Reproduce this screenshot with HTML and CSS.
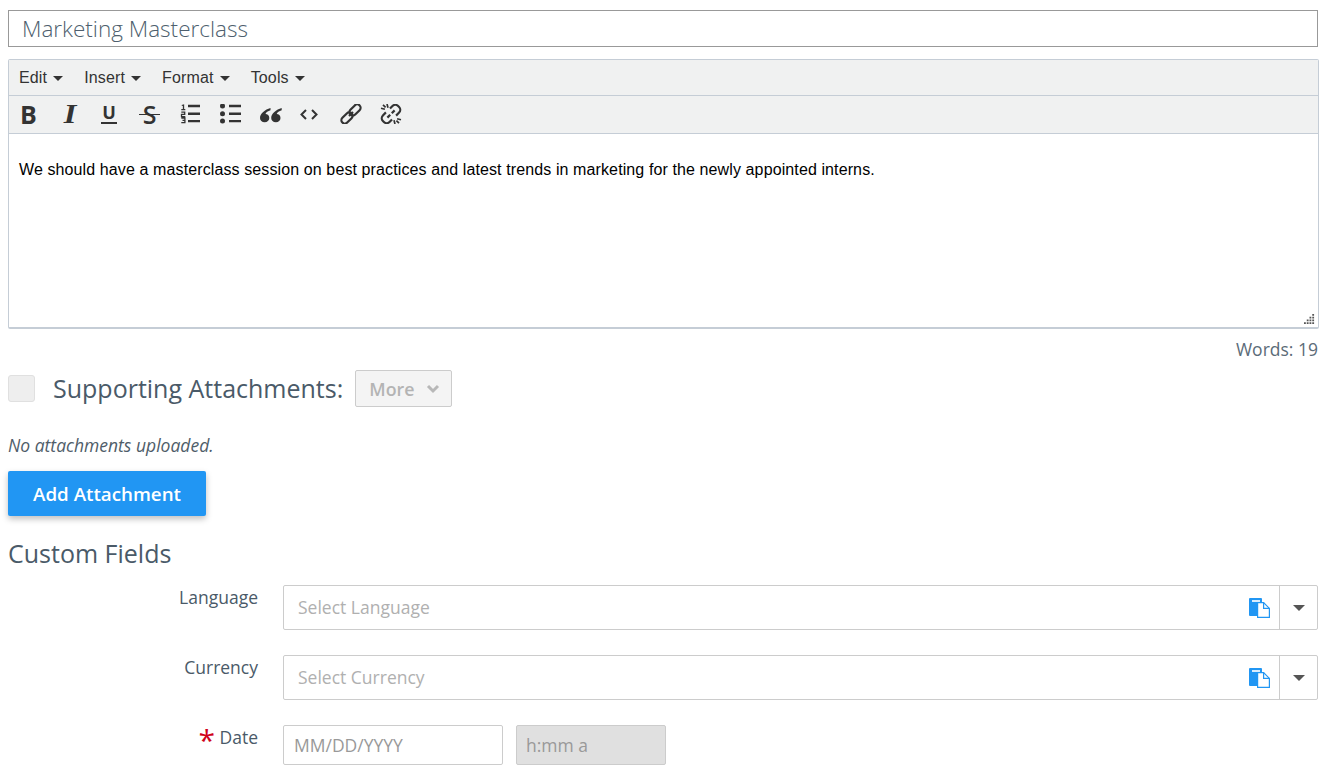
FILE: index.html
```html
<!DOCTYPE html>
<html lang="en">
<head>
<meta charset="utf-8">
<title>Marketing Masterclass</title>
<link rel="stylesheet" href="styles.css">
</head>
<body>
<main class="page">
  <div class="title-input">Marketing Masterclass</div>

  <section class="editor">
    <div class="menubar">
      <span class="menu-item">Edit<i class="caret"></i></span>
      <span class="menu-item">Insert<i class="caret"></i></span>
      <span class="menu-item">Format<i class="caret"></i></span>
      <span class="menu-item">Tools<i class="caret"></i></span>
    </div>
    <div class="toolbar">
      <span class="tool"><span class="glyph glyph-b">B</span></span>
      <span class="tool"><span class="glyph glyph-i">I</span></span>
      <span class="tool"><span class="glyph glyph-u">U</span></span>
      <span class="tool"><span class="glyph glyph-s">S</span></span>
      <span class="tool">
        <svg class="icon" viewBox="0 0 22 20"><path d="M8 .8h12v2.400H8zM8 8.500h12v2.400H8zM8 15.900h12v2.400H8z" fill="#333"/><path d="M1.800 1.500 3.500 1v4.500M1.300 5.700h4M1.300 8.200h3.400v2.200H1.500v2.200h3.800M1.300 14h3.600v4.600H1.300M2.500 16.300h2.400" fill="none" stroke="#333" stroke-width="1.300"/></svg>
      </span>
      <span class="tool">
        <svg class="icon" viewBox="-1 0 22 20"><circle cx="1.500" cy="2" r="2.500" fill="#333"/><circle cx="1.500" cy="9.700" r="2.500" fill="#333"/><circle cx="1.500" cy="17" r="2.500" fill="#333"/><path d="M8 .8h12v2.400H8zM8 8.500h12v2.400H8zM8 15.900h12v2.400H8z" fill="#333"/></svg>
      </span>
      <span class="tool">
        <svg class="icon" viewBox="-1 0 22 20"><path d="M9.500 4C4 5.500-1 9.500-1 14c0 2.500 2 4.300 4.700 4.300 2.600 0 4.600-1.800 4.600-4.300 0-2.500-1.800-4-3.800-4 .5-1.700 2.500-3 5-3.700Z" fill="#333"/><path d="M20.700 4C15.200 5.500 10.200 9.500 10.200 14c0 2.500 2 4.300 4.700 4.300 2.600 0 4.600-1.800 4.600-4.300 0-2.500-1.800-4-3.800-4 .5-1.700 2.500-3 5-3.700Z" fill="#333"/></svg>
      </span>
      <span class="tool">
        <svg class="icon" viewBox="0 0 22 20"><path d="M6 6 1.500 10.500 6 15M12 6l4.500 4.500L12 15" fill="none" stroke="#333" stroke-width="2"/></svg>
      </span>
      <span class="tool">
        <svg class="icon" viewBox="-1 0 22 20" fill="none" stroke="#333" stroke-width="2.200"><rect x="7.500" y="2.600" width="13" height="6.800" rx="3.400" transform="rotate(-45 14 6)"/><rect x="-.5" y="10.600" width="13" height="6.800" rx="3.400" transform="rotate(-45 6 14)"/><path d="M8 12l4-4"/></svg>
      </span>
      <span class="tool">
        <svg class="icon" viewBox="-1 0 22 20" fill="none" stroke="#333" stroke-width="2.200"><path d="M9 4.500l2.500-2.500a4 4 0 0 1 5.600 0l1 1a4 4 0 0 1 0 5.600l-3 3"/><path d="M11 15.500l-2.500 2.500a4 4 0 0 1-5.600 0l-1-1a4 4 0 0 1 0-5.600l3-3"/><path d="M10.800 9.200l2.800-2.800M9.200 10.800l-2.800 2.800"/><path stroke-width="1.700" d="M6 0l1 3.800M0 4.300l3.900 1M2 .8l2.600 2.600M14 20l-1-3.800M20 15.700l-3.900-1M18 19.200l-2.600-2.600"/></svg>
      </span>
    </div>
    <div class="editor-body">
      <p class="editor-text">We should have a masterclass session on best practices and latest trends in marketing for the newly appointed interns.</p>
      <svg class="resize-grip" viewBox="0 0 12 12"><path d="M9 0h2v2H9zM6 3h2v2H6zM9 3h2v2H9zM3 6h2v2H3zM6 6h2v2H6zM9 6h2v2H9zM0 9h2v2H0zM3 9h2v2H3zM6 9h2v2H6zM9 9h2v2H9z" fill="#555"/></svg>
    </div>
  </section>

  <div class="word-count">Words: 19</div>

  <div class="attach-head">
    <span class="check"></span>
    <h2 class="attach-title">Supporting Attachments:</h2>
    <span class="more-btn">More
      <svg class="more-chevron" viewBox="0 0 14 10"><path d="M2 2l5 5 5-5" fill="none" stroke="#b8b8b8" stroke-width="3"/></svg>
    </span>
  </div>

  <p class="no-attach">No attachments uploaded.</p>
  <div class="add-btn">Add Attachment</div>

  <h2 class="custom-title">Custom Fields</h2>

  <div class="fields">
    <div class="field-row">
      <label class="field-label">Language</label>
      <div class="select">
        <span class="select-text">Select Language</span>
        <svg class="copy-icon" viewBox="0 0 21 20"><path d="M1 0h11a1 1 0 0 1 1 1v17H1a1 1 0 0 1-1-1V1a1 1 0 0 1 1-1z" fill="#2196f3"/><path d="M3 2h8v2H3z" fill="#d8ecfd"/><path d="M8.600 4.600h6l5.800 5.800v9H8.600z" fill="#fff" stroke="#2196f3" stroke-width="1.200"/><path d="M14.600 4.600v5.800h5.800" fill="none" stroke="#2196f3" stroke-width="1.200"/></svg>
        <span class="select-arrow"><i class="arrow"></i></span>
      </div>
    </div>
    <div class="field-row">
      <label class="field-label">Currency</label>
      <div class="select">
        <span class="select-text">Select Currency</span>
        <svg class="copy-icon" viewBox="0 0 21 20"><path d="M1 0h11a1 1 0 0 1 1 1v17H1a1 1 0 0 1-1-1V1a1 1 0 0 1 1-1z" fill="#2196f3"/><path d="M3 2h8v2H3z" fill="#d8ecfd"/><path d="M8.600 4.600h6l5.800 5.800v9H8.600z" fill="#fff" stroke="#2196f3" stroke-width="1.200"/><path d="M14.600 4.600v5.800h5.800" fill="none" stroke="#2196f3" stroke-width="1.200"/></svg>
        <span class="select-arrow"><i class="arrow"></i></span>
      </div>
    </div>
    <div class="field-row">
      <label class="field-label"><span class="req">*</span> Date</label>
      <div class="date-group">
        <div class="date-input">MM/DD/YYYY</div>
        <div class="time-input">h:mm a</div>
      </div>
    </div>
  </div>
</main>
</body>
</html>
```

FILE: styles.css
```css
* { box-sizing: border-box; }
html, body { margin: 0; padding: 0; background: #fff; }
body { font-family: "Open Sans", sans-serif; color: #4a5a68; overflow: hidden; height: 777px; }
.page { padding: 10px 12px 0 8px; width: 1330px; }
.title-input {
  height: 37px; border: 1px solid #999; padding-left: 13px;
  font-size: 22.500px; font-weight: 300; line-height: 35px; color: #4e5f6e;
}
.editor {
  margin-top: 12px; margin-right: -1px; height: 270px;
  border: 1px solid #c5cdd6; border-bottom-width: 2px; border-radius: 2px;
  display: flex; flex-direction: column;
}
.menubar {
  height: 36px; background: #f0f1f1; border-bottom: 1px solid #c5cdd6;
  display: flex; align-items: center; padding-left: 10px; gap: 21px;
  font-family: "Liberation Sans", sans-serif; font-size: 16px; letter-spacing: .15px; color: #333;
}
.menu-item { display: flex; align-items: center; }
.caret {
  margin-left: 6px; margin-top: 1px; width: 0; height: 0;
  border-left: 5px solid transparent; border-right: 5px solid transparent; border-top: 5px solid #333;
}
.toolbar {
  height: 38px; background: #f0f1f1; border-bottom: 1px solid #c5cdd6;
  display: flex; padding: 8px 0 0 10px;
}
.tool { width: 40px; height: 20px; display: flex; align-items: center; padding-left: 1px; }
.icon { width: 22px; height: 20px; display: block; }
.glyph { color: #333; display: block; line-height: 20px; height: 20px; position: relative; }
.glyph-b { font-weight: 700; font-size: 25px; width: 16px; text-align: center; }
.glyph-i { font-family: "Liberation Serif", serif; font-weight: 700; font-style: italic; font-size: 27px; margin-left: 2px; width: 16px; text-align: center; transform: scaleX(1.200); }
.glyph-u { font-weight: 700; font-size: 18px; line-height: 17px; width: 16px; margin-left: 1px; text-align: center; border-bottom: 2px solid #333; height: 20px; }
.glyph-s { font-weight: 600; font-size: 25px; width: 21px; margin-left: -1px; text-align: center; }
.glyph-s::after { content: ""; position: absolute; left: 0; right: 0; top: 9.500px; height: 1.500px; background: #333; }
.editor-body { flex: 1; background: #fff; position: relative; padding: 26px 10px 0; }
.editor-text { margin: 0; font-family: "Liberation Sans", sans-serif; font-size: 16px; line-height: 19px; letter-spacing: .11px; color: #000; }
.resize-grip { position: absolute; right: 3px; bottom: 2px; width: 11px; height: 11px; }
.word-count { margin-top: 9px; text-align: right; font-size: 17.500px; line-height: 22px; color: #5b6b78; }
.attach-head { display: flex; align-items: center; margin-top: 10px; height: 37px; }
.check { width: 27px; height: 27px; background: #eee; border: 1px solid #e0e0e0; border-radius: 3px; }
.attach-title { margin: 0 0 0 18px; font-size: 25px; font-weight: 400; line-height: 37px; color: #4a5a68; }
.more-btn {
  margin-left: 12px; width: 97px; height: 37px; background: #f4f4f4; border: 1px solid #ccc; border-radius: 2px;
  display: flex; align-items: center; padding-left: 13px; font-size: 17.800px; font-weight: 600; color: #b4b4b4;
}
.more-chevron { width: 14px; height: 10px; margin-left: 12px; }
.no-attach { margin: 27px 0 0; font-size: 17.500px; line-height: 22px; font-style: italic; color: #4f5d69; }
.add-btn {
  margin-top: 15px; width: 198px; height: 45px; background: #2196f3; border-radius: 2px; color: #fff;
  font-size: 18.750px; font-weight: 600; text-align: center; line-height: 46px;
  box-shadow: 0 3px 6px rgba(0,0,0,.25);
}
.custom-title { margin: 20px 0 15px; font-size: 25px; font-weight: 400; line-height: 34px; color: #4a5a68; }
.fields { display: flex; flex-direction: column; gap: 25px; }
.field-row { display: flex; }
.field-label { width: 250px; text-align: right; font-size: 17.500px; line-height: 24px; color: #4a5a68; flex-shrink: 0; margin-right: 25px; }
.req { color: #d0021b; font-size: 30px; line-height: 20px; vertical-align: -7px; }
.select {
  flex: 1; height: 45px; border: 1px solid #ccc; border-radius: 2px; display: flex; align-items: center;
}
.select-text { flex: 1; padding: 0 0 2px 14px; font-size: 17.500px; color: #b0b0b0; }
.copy-icon { width: 21px; height: 20px; margin-right: 9px; }
.select-arrow { width: 38px; height: 100%; border-left: 1px solid #ccc; display: flex; align-items: center; justify-content: center; }
.arrow { width: 0; height: 0; border-left: 6px solid transparent; border-right: 6px solid transparent; border-top: 6px solid #555; }
.date-group { display: flex; gap: 13px; }
.date-input, .time-input { height: 40px; line-height: 38px; border: 1px solid #ccc; border-radius: 2px; font-size: 17.500px; color: #999; }
.date-input { width: 220px; padding-left: 10px; }
.time-input { width: 150px; padding-left: 9px; background: #e0e0e0; color: #999; }
```
